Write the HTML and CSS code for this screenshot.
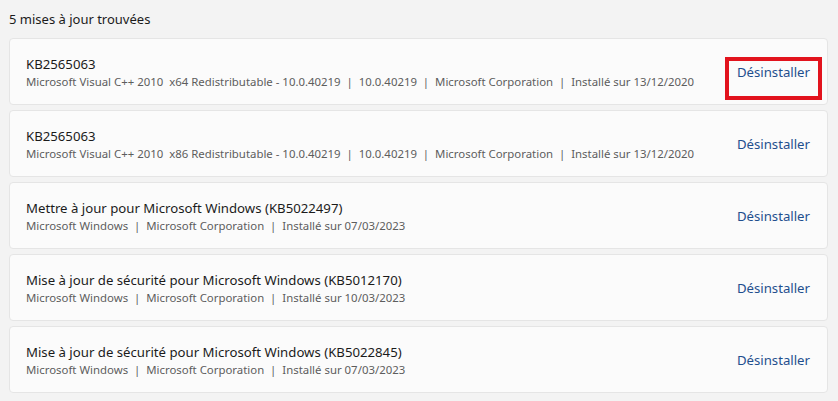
FILE: index.html
```html
<!DOCTYPE html>
<html>
<head>
<meta charset="UTF-8">
<title>Mises à jour installées</title>
<link rel="stylesheet" href="styles.css">
</head>
<body>
	<h1 class="listTitle">5 mises à jour trouvées</h1>

	<div class="updateList">
		<div class="updateCard">
			<div class="updateInfo">
				<div class="updateName">KB2565063</div>
				<div class="updateMeta">Microsoft Visual C++ 2010  x64 Redistributable - 10.0.40219  |  10.0.40219  |  Microsoft Corporation  |  Installé sur 13/12/2020</div>
			</div>
			<button class="uninstallButton marked">Désinstaller</button>
		</div>
		<div class="updateCard">
			<div class="updateInfo">
				<div class="updateName">KB2565063</div>
				<div class="updateMeta">Microsoft Visual C++ 2010  x86 Redistributable - 10.0.40219  |  10.0.40219  |  Microsoft Corporation  |  Installé sur 13/12/2020</div>
			</div>
			<button class="uninstallButton">Désinstaller</button>
		</div>
		<div class="updateCard">
			<div class="updateInfo">
				<div class="updateName">Mettre à jour pour Microsoft Windows (KB5022497)</div>
				<div class="updateMeta">Microsoft Windows  |  Microsoft Corporation  |  Installé sur 07/03/2023</div>
			</div>
			<button class="uninstallButton">Désinstaller</button>
		</div>
		<div class="updateCard">
			<div class="updateInfo">
				<div class="updateName">Mise à jour de sécurité pour Microsoft Windows (KB5012170)</div>
				<div class="updateMeta">Microsoft Windows  |  Microsoft Corporation  |  Installé sur 10/03/2023</div>
			</div>
			<button class="uninstallButton">Désinstaller</button>
		</div>
		<div class="updateCard">
			<div class="updateInfo">
				<div class="updateName">Mise à jour de sécurité pour Microsoft Windows (KB5022845)</div>
				<div class="updateMeta">Microsoft Windows  |  Microsoft Corporation  |  Installé sur 07/03/2023</div>
			</div>
			<button class="uninstallButton">Désinstaller</button>
		</div>
	</div>
</body>
</html>
```

FILE: styles.css
```css
*{
	box-sizing: border-box;
	font-family: 'Segoe UI', 'Noto Sans', sans-serif;
}
body{
	margin: 0;
	padding: 0 10px 0 9px;
	background: #f3f3f3;
	color: #1b1b1b;
}
.listTitle{
	font-size: 13px;
	font-weight: normal;
	line-height: 20px;
	margin: 9px 0 9px 0;
}
.updateList{
	display: flex;
	flex-direction: column;
	gap: 5px;
}
.updateCard{
	height: 67px;
	display: flex;
	align-items: center;
	justify-content: space-between;
	padding: 0 9px 0 16px;
	background: #fbfbfb;
	border: 1px solid #e5e5e5;
	border-radius: 4px;
}
.updateName{
	font-size: 13.2px;
	line-height: 19px;
	padding-top: 2px;
}
.updateMeta{
	font-size: 11.4px;
	line-height: 16px;
	color: #5d5d5d;
	white-space: pre;
}
.uninstallButton{
	position: relative;
	flex-shrink: 0;
	height: 32px;
	padding: 0 8px;
	border: none;
	background: none;
	font-size: 13.2px;
	color: #1f4f8e;
	cursor: pointer;
}
.uninstallButton.marked::after{
	content: "";
	position: absolute;
	left: -4px;
	right: -4px;
	top: 1px;
	bottom: -12px;
	border: 4px solid #e2131d;
}
```
